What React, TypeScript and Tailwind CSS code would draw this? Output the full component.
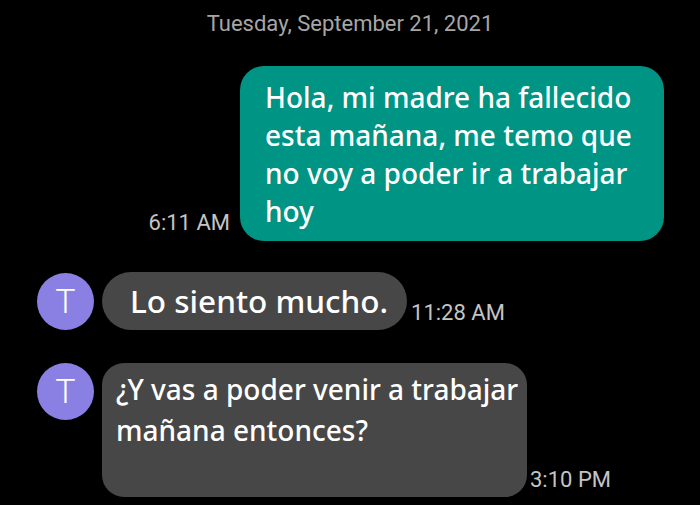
const msgFont = { fontFamily: '"Noto Sans", "Open Sans", sans-serif' };

function Avatar() {
  return (
    <div className="mr-[8px] flex h-[57px] w-[57px] shrink-0 items-center justify-center rounded-full bg-[#8a7fe3] font-['Roboto',sans-serif] text-[34px] font-light text-white">
      T
    </div>
  );
}

export default function App() {
  return (
    <div className="flex h-[505px] w-[700px] flex-col overflow-hidden bg-black font-['Roboto',sans-serif]">
      <div className="pt-[10px] text-center text-[22px] leading-[28px] text-[#a6a6a6]">
        Tuesday, September 21, 2021
      </div>

      <div className="mt-[28px] flex items-end justify-end gap-[10px] pr-[36px]">
        <span className="pb-[2px] text-[22px] text-[#c4c4c4]">6:11 AM</span>
        <div
          className="w-[424px] rounded-[24px] bg-[#009485] pb-[11px] pl-[25px] pr-[20px] pt-[12px] text-[28px] font-medium leading-[38px] text-white"
          style={msgFont}
        >
          Hola, mi madre ha fallecido esta mañana, me temo que no voy a poder ir a trabajar hoy
        </div>
      </div>

      <div className="mt-[31px] flex items-center pl-[37px]">
        <Avatar />
        <div
          className="flex h-[58px] items-center rounded-full bg-[#474747] pl-[28px] pr-[19px] text-[31.5px] font-medium text-white"
          style={msgFont}
        >
          Lo siento mucho.
        </div>
        <span className="ml-[4px] self-end pb-[1px] text-[22px] text-[#c4c4c4]">11:28 AM</span>
      </div>

      <div className="mt-[33px] flex items-start pl-[37px]">
        <Avatar />
        <div
          className="h-[134px] w-[425px] rounded-[22px] bg-[#474747] pl-[14px] pt-[6px] text-[28px] font-medium leading-[41px] text-white"
          style={msgFont}
        >
          ¿Y vas a poder venir a trabajar mañana entonces?
        </div>
        <span className="ml-[3px] self-end pb-[1px] text-[22px] text-[#c4c4c4]">3:10 PM</span>
      </div>
    </div>
  );
}
